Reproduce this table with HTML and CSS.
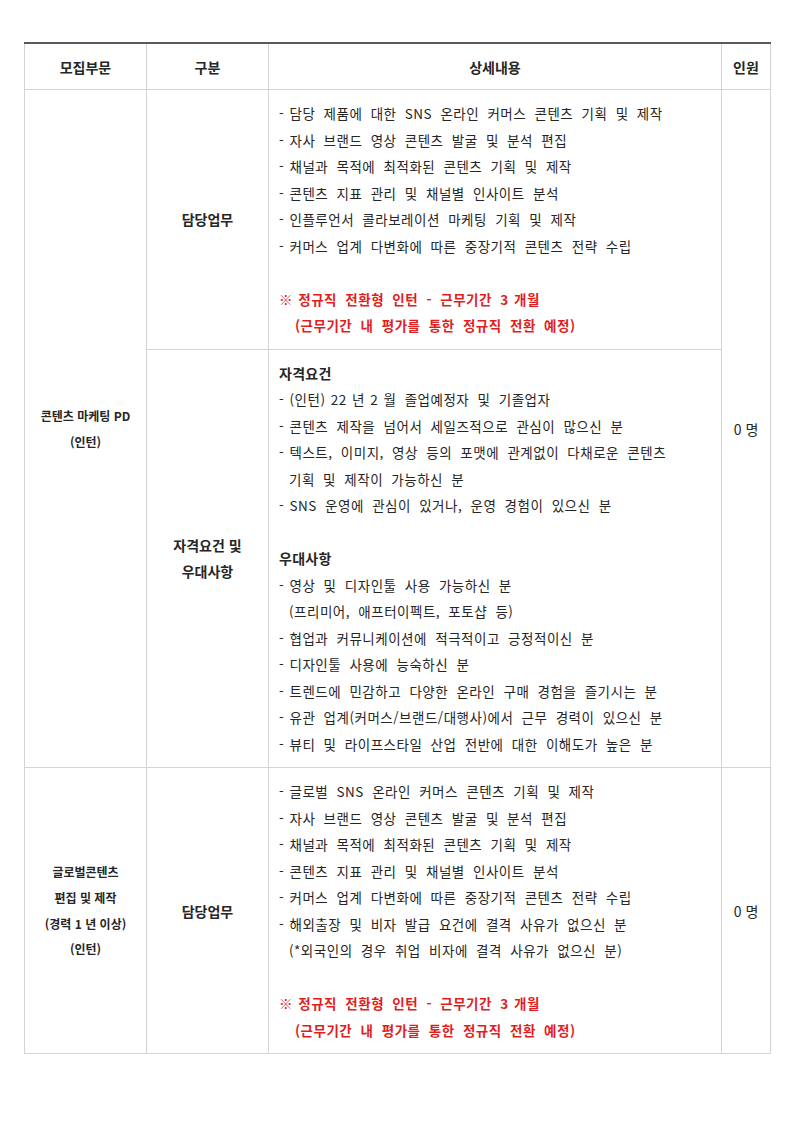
FILE: index.html
```html
<!DOCTYPE html>
<html lang="ko">
<head>
<meta charset="utf-8">
<link rel="stylesheet" href="styles.css">
</head>
<body>
<table class="jobs">
  <colgroup>
    <col class="c1"><col class="c2"><col class="c3"><col class="c4">
  </colgroup>
  <thead>
    <tr>
      <th>모집부문</th>
      <th>구분</th>
      <th>상세내용</th>
      <th>인원</th>
    </tr>
  </thead>
  <tbody>
    <tr>
      <td class="dept" rowspan="2"><div>콘텐츠 마케팅 PD</div><div>(인턴)</div></td>
      <td class="kind">담당업무</td>
      <td class="detail">
        <div><span class="t">- </span>담당 제품에 대한 SNS 온라인 커머스 콘텐츠 기획 및 제작</div>
        <div><span class="t">- </span>자사 브랜드 영상 콘텐츠 발굴 및 분석 편집</div>
        <div><span class="t">- </span>채널과 목적에 최적화된 콘텐츠 기획 및 제작</div>
        <div><span class="t">- </span>콘텐츠 지표 관리 및 채널별 인사이트 분석</div>
        <div><span class="t">- </span>인플루언서 콜라보레이션 마케팅 기획 및 제작</div>
        <div><span class="t">- </span>커머스 업계 다변화에 따른 중장기적 콘텐츠 전략 수립</div>
        <div class="blank">&nbsp;</div>
        <div class="red"><span class="t">※ </span>정규직 전환형 인턴 - 근무기간 <span class="t">3 </span>개월</div>
        <div class="red ind2">(근무기간 내 평가를 통한 정규직 전환 예정)</div>
      </td>
      <td class="count" rowspan="2">0 명</td>
    </tr>
    <tr>
      <td class="kind">자격요건 및<br>우대사항</td>
      <td class="detail">
        <div class="sub">자격요건</div>
        <div><span class="t">- (인턴) 22 년 2 </span>월 졸업예정자 및 기졸업자</div>
        <div><span class="t">- </span>콘텐츠 제작을 넘어서 세일즈적으로 관심이 많으신 분</div>
        <div><span class="t">- </span>텍스트, 이미지, 영상 등의 포맷에 관계없이 다채로운 콘텐츠</div>
        <div class="ind">기획 및 제작이 가능하신 분</div>
        <div><span class="t">- </span>SNS 운영에 관심이 있거나, 운영 경험이 있으신 분</div>
        <div class="blank">&nbsp;</div>
        <div class="sub">우대사항</div>
        <div><span class="t">- </span>영상 및 디자인툴 사용 가능하신 분</div>
        <div class="ind">(프리미어, 애프터이펙트, 포토샵 등)</div>
        <div><span class="t">- </span>협업과 커뮤니케이션에 적극적이고 긍정적이신 분</div>
        <div><span class="t">- </span>디자인툴 사용에 능숙하신 분</div>
        <div><span class="t">- </span>트렌드에 민감하고 다양한 온라인 구매 경험을 즐기시는 분</div>
        <div><span class="t">- </span>유관 업계(커머스/브랜드/대행사)에서 근무 경력이 있으신 분</div>
        <div><span class="t">- </span>뷰티 및 라이프스타일 산업 전반에 대한 이해도가 높은 분</div>
      </td>
    </tr>
    <tr>
      <td class="dept"><div>글로벌콘텐츠</div><div>편집 및 제작</div><div>(경력 1 년 이상)</div><div>(인턴)</div></td>
      <td class="kind">담당업무</td>
      <td class="detail">
        <div><span class="t">- </span>글로벌 SNS 온라인 커머스 콘텐츠 기획 및 제작</div>
        <div><span class="t">- </span>자사 브랜드 영상 콘텐츠 발굴 및 분석 편집</div>
        <div><span class="t">- </span>채널과 목적에 최적화된 콘텐츠 기획 및 제작</div>
        <div><span class="t">- </span>콘텐츠 지표 관리 및 채널별 인사이트 분석</div>
        <div><span class="t">- </span>커머스 업계 다변화에 따른 중장기적 콘텐츠 전략 수립</div>
        <div><span class="t">- </span>해외출장 및 비자 발급 요건에 결격 사유가 없으신 분</div>
        <div class="ind">(*외국인의 경우 취업 비자에 결격 사유가 없으신 분)</div>
        <div class="blank">&nbsp;</div>
        <div class="red"><span class="t">※ </span>정규직 전환형 인턴 - 근무기간 <span class="t">3 </span>개월</div>
        <div class="red ind2">(근무기간 내 평가를 통한 정규직 전환 예정)</div>
      </td>
      <td class="count">0 명</td>
    </tr>
  </tbody>
</table>
</body>
</html>
```

FILE: styles.css
```css
html, body {
  margin: 0;
  padding: 0;
  background: #ffffff;
}

body {
  font-family: "Noto Sans CJK KR", "Noto Sans", sans-serif;
  color: #262626;
  padding: 42px 0 0 24px;
}

.jobs {
  border-collapse: collapse;
  table-layout: fixed;
  width: 746px;
}

.c1 { width: 122px; }
.c2 { width: 122px; }
.c3 { width: 453px; }
.c4 { width: 49px; }

.jobs th,
.jobs td {
  border: 1px solid #d4d4d4;
  padding: 0;
}

.jobs thead th {
  border-top: 2px solid #5a5a5a;
  height: 45px;
  font-size: 14px;
  font-weight: 700;
  text-align: center;
  vertical-align: middle;
}

.dept {
  text-align: center;
  vertical-align: middle;
  font-size: 12px;
  font-weight: 700;
  line-height: 25.8px;
}

.kind {
  text-align: center;
  vertical-align: middle;
  font-size: 14px;
  font-weight: 700;
  line-height: 26px;
}

.count {
  text-align: center;
  vertical-align: middle;
  font-size: 14px;
}

.jobs td.detail {
  font-size: 13.5px;
  letter-spacing: 0.5px;
  word-spacing: 4px;
  line-height: 26.5px;
  padding: 10px 8px 10px 10px;
  vertical-align: top;
  white-space: nowrap;
}

.t {
  word-spacing: 1px;
}

.sub {
  font-weight: 700;
  font-size: 14px;
  letter-spacing: 0.3px;
}

.ind {
  padding-left: 10px;
}

.ind2 {
  padding-left: 16px;
}

.red {
  color: #e01e1e;
  font-weight: 700;
}
```
